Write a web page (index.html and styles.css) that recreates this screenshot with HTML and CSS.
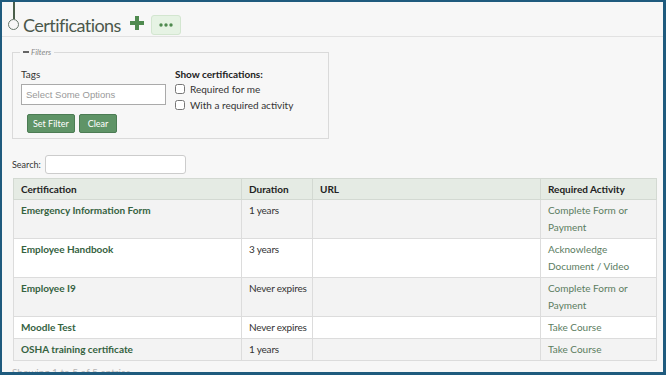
FILE: index.html
```html
<!DOCTYPE html>
<html lang="en">
<head>
    <meta charset="UTF-8">
    <meta name="viewport" content="width=device-width, initial-scale=1.0">
    <title>Certifications</title>
    <link rel="stylesheet" href="styles.css">
</head>
<body>
    <div class="frame">
        <header class="page-header">
            <div class="marker">
                <span class="marker-line"></span>
                <span class="marker-dot"></span>
            </div>
            <h1>Certifications</h1>
            <button class="add-btn" title="Add">
                <svg width="14" height="14" viewBox="0 0 14 14"><path d="M5 0h4v5h5v4H9v5H5V9H0V5h5z" fill="#4f8a4f"/></svg>
            </button>
            <button class="more-btn" title="More">
                <svg width="14" height="4" viewBox="0 0 14 4"><circle cx="2" cy="2" r="1.7" fill="#4f8a4f"/><circle cx="7" cy="2" r="1.7" fill="#4f8a4f"/><circle cx="12" cy="2" r="1.7" fill="#4f8a4f"/></svg>
            </button>
        </header>

        <div class="content">
            <fieldset class="filters">
                <legend><span class="dash"></span>Filters</legend>
                <div class="filter-cols">
                    <div class="filter-tags">
                        <label class="field-label">Tags</label>
                        <input type="text" class="tags-input" placeholder="Select Some Options">
                        <div class="filter-buttons">
                            <button class="btn">Set Filter</button>
                            <button class="btn">Clear</button>
                        </div>
                    </div>
                    <div class="filter-show">
                        <div class="show-title">Show certifications:</div>
                        <label class="check"><input type="checkbox"> Required for me</label>
                        <label class="check"><input type="checkbox"> With a required activity</label>
                    </div>
                </div>
            </fieldset>

            <div class="search">
                <label>Search:</label>
                <input type="text" class="search-input">
            </div>

            <table class="cert-table">
                <thead>
                    <tr>
                        <th class="col-name">Certification</th>
                        <th class="col-duration">Duration</th>
                        <th class="col-url">URL</th>
                        <th class="col-activity">Required Activity</th>
                    </tr>
                </thead>
                <tbody>
                    <tr>
                        <td><a href="#">Emergency Information Form</a></td>
                        <td class="duration">1 years</td>
                        <td></td>
                        <td class="activity">Complete Form or Payment</td>
                    </tr>
                    <tr>
                        <td><a href="#">Employee Handbook</a></td>
                        <td class="duration">3 years</td>
                        <td></td>
                        <td class="activity">Acknowledge Document / Video</td>
                    </tr>
                    <tr>
                        <td><a href="#">Employee I9</a></td>
                        <td class="duration">Never expires</td>
                        <td></td>
                        <td class="activity">Complete Form or Payment</td>
                    </tr>
                    <tr>
                        <td><a href="#">Moodle Test</a></td>
                        <td class="duration">Never expires</td>
                        <td></td>
                        <td class="activity">Take Course</td>
                    </tr>
                    <tr>
                        <td><a href="#">OSHA training certificate</a></td>
                        <td class="duration">1 years</td>
                        <td></td>
                        <td class="activity">Take Course</td>
                    </tr>
                </tbody>
            </table>

            <div class="table-info">Showing 1 to 5 of 5 entries</div>
        </div>
    </div>
</body>
</html>
```

FILE: styles.css
```css
* {
    margin: 0;
    padding: 0;
    box-sizing: border-box;
}

body {
    font-family: 'Lato', 'Open Sans', sans-serif;
    background: #ffffff;
    color: #333;
}

.frame {
    width: 666px;
    height: 375px;
    overflow: hidden;
    background: #f7f7f7;
    border: 2px solid #1f5b7e;
    border-right-width: 3px;
    border-bottom-width: 3px;
}

/* Cabeçalho da página */
.page-header {
    display: flex;
    align-items: flex-start;
    height: 35px;
    border-bottom: 1px solid #e2e2e2;
    padding-left: 6px;
}

.marker {
    display: flex;
    flex-direction: column;
    align-items: center;
    width: 11px;
}

.marker-line {
    width: 2px;
    height: 17px;
    background: #4a5e4a;
}

.marker-dot {
    width: 11px;
    height: 11px;
    border: 1.5px solid #66766a;
    border-radius: 50%;
}

h1 {
    font-size: 18px;
    font-weight: normal;
    letter-spacing: -0.55px;
    color: #4b584b;
    margin-left: 4px;
    margin-top: 11px;
    line-height: 24px;
}

.add-btn {
    background: none;
    border: none;
    margin-left: 9px;
    margin-top: 14px;
    width: 15px;
    height: 16px;
}

.more-btn {
    margin-left: 6px;
    margin-top: 13px;
    width: 30px;
    height: 20px;
    background: #e6f3e4;
    border: 1px solid #d3e6d0;
    border-radius: 3px;
    display: flex;
    align-items: center;
    justify-content: center;
}

.content {
    padding: 10px 8px 0 10px;
}

/* Filtros */
.filters {
    width: 317px;
    height: 92px;
    border: 1px solid #dadada;
    padding: 0 8px;
}

.filters legend {
    font-size: 8px;
    font-style: italic;
    color: #888;
    padding: 0 3px;
    margin-left: -1px;
    display: flex;
    align-items: center;
    line-height: 10px;
}

.dash {
    display: inline-block;
    width: 6px;
    height: 2px;
    background: #666;
    margin-right: 2px;
}

.filter-cols {
    display: flex;
    gap: 9px;
    margin-top: 11px;
}

.filter-tags {
    width: 145px;
}

.field-label {
    display: block;
    font-size: 10px;
    color: #333;
    line-height: 13px;
    margin-bottom: 3px;
}

.tags-input {
    display: block;
    width: 145px;
    height: 21px;
    border: 1px solid #aaa;
    background: #fff;
    padding: 0 4px;
    font-family: 'Liberation Sans', Arial, sans-serif;
    font-size: 9.5px;
}

.tags-input::placeholder {
    color: #999;
}

.filter-buttons {
    display: flex;
    gap: 4px;
    margin-top: 9px;
    padding-left: 6px;
}

.btn {
    height: 19px;
    padding: 0 5px;
    background: #5f9467;
    border: 1px solid #4c7c54;
    border-radius: 2px;
    color: #fff;
    font-family: inherit;
    font-size: 9px;
}

.btn + .btn {
    padding: 0 8px;
}

.show-title {
    font-size: 10px;
    font-weight: bold;
    color: #222;
    line-height: 13px;
}

.check {
    display: flex;
    align-items: center;
    gap: 5px;
    font-size: 10px;
    color: #333;
    height: 16px;
}

.check input {
    width: 10px;
    height: 10px;
    margin: 0;
}

/* Busca */
.search {
    display: flex;
    align-items: center;
    gap: 4px;
    margin-top: 16px;
    font-size: 9px;
    color: #333;
}

.search-input {
    width: 141px;
    height: 19px;
    border: 1px solid #ccc;
    border-radius: 3px;
    background: #fff;
}

/* Tabela */
.cert-table {
    margin-top: 4px;
    margin-left: 1px;
    width: 643px;
    table-layout: fixed;
    border-collapse: collapse;
    font-size: 10px;
    border: 1px solid #d6d6d6;
}

.cert-table th {
    background: #e5ebe4;
    text-align: left;
    font-weight: bold;
    color: #222;
    height: 21px;
    padding: 0 7px;
    border: 1px solid #d3d9d2;
}

.cert-table td {
    vertical-align: top;
    padding: 2px 7px;
    line-height: 17px;
    border: 1px solid #dcdcdc;
    color: #333;
}

.col-name { width: 228px; }
.col-duration { width: 71px; }
.col-url { width: 228px; }
.col-activity { width: 116px; }

.cert-table .duration {
    white-space: nowrap;
    letter-spacing: -0.2px;
}

.cert-table tbody tr:nth-child(odd) {
    background: #f3f3f3;
}

.cert-table tbody tr:nth-child(even) {
    background: #ffffff;
}

.cert-table a {
    color: #35623f;
    font-weight: bold;
    text-decoration: none;
}

.cert-table .activity {
    color: #5b7d5f;
}

.table-info {
    margin-top: 5px;
    font-size: 10px;
    color: #b5b5b5;
}
```
